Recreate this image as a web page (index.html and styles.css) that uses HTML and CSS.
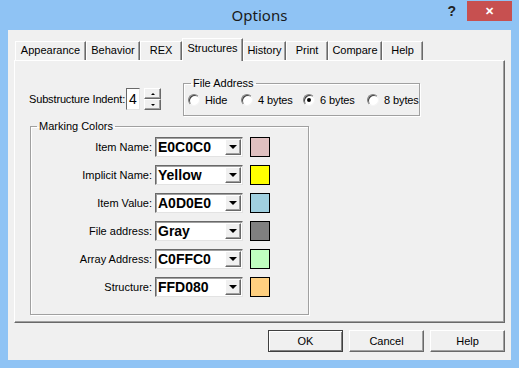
FILE: index.html
```
<!DOCTYPE html>
<html lang="en">
<head>
  <meta charset="UTF-8">
  <title>Options</title>
  <link rel="stylesheet" href="styles.css">
</head>
<body>
  <div class="window">
    <div class="titlebar">
      <div></div>
      <div class="title">Options</div>
      <div class="caption-btns">
        <span class="help-q">?</span>
        <span class="close-btn">&#x2715;</span>
      </div>
    </div>

    <div class="client">
      <div class="tabs">
        <div class="tab w-appearance">Appearance</div>
        <div class="tab w-behavior">Behavior</div>
        <div class="tab w-rex">REX</div>
        <div class="tab selected w-structures">Structures</div>
        <div class="tab w-history">History</div>
        <div class="tab w-print">Print</div>
        <div class="tab w-compare">Compare</div>
        <div class="tab w-help">Help</div>
      </div>

      <div class="panel">
        <div class="top-row">
          <div class="indent">
            <span class="indent-label">Substructure Indent:</span>
            <span class="edit">4</span>
            <span class="spinner">
              <span class="spin-btn"><span class="arrow-up"></span></span>
              <span class="spin-btn"><span class="arrow-down"></span></span>
            </span>
          </div>

          <fieldset class="group file-address">
            <legend>File Address</legend>
            <div class="radios">
              <label class="radio-item r1"><span class="radio"></span>Hide</label>
              <label class="radio-item r2"><span class="radio"></span>4 bytes</label>
              <label class="radio-item r3"><span class="radio"><span class="dot"></span></span>6 bytes</label>
              <label class="radio-item"><span class="radio"></span>8 bytes</label>
            </div>
          </fieldset>
        </div>

        <fieldset class="group marking">
          <legend>Marking Colors</legend>
          <div class="color-rows">
            <span class="row-label">Item Name:</span>
            <span class="combo"><span class="combo-text">E0C0C0</span><span class="drop"><span class="arrow-down big"></span></span></span>
            <span class="swatch c-item-name"></span>

            <span class="row-label">Implicit Name:</span>
            <span class="combo"><span class="combo-text">Yellow</span><span class="drop"><span class="arrow-down big"></span></span></span>
            <span class="swatch c-implicit"></span>

            <span class="row-label">Item Value:</span>
            <span class="combo"><span class="combo-text">A0D0E0</span><span class="drop"><span class="arrow-down big"></span></span></span>
            <span class="swatch c-item-value"></span>

            <span class="row-label">File address:</span>
            <span class="combo"><span class="combo-text">Gray</span><span class="drop"><span class="arrow-down big"></span></span></span>
            <span class="swatch c-file"></span>

            <span class="row-label">Array Address:</span>
            <span class="combo"><span class="combo-text">C0FFC0</span><span class="drop"><span class="arrow-down big"></span></span></span>
            <span class="swatch c-array"></span>

            <span class="row-label">Structure:</span>
            <span class="combo"><span class="combo-text">FFD080</span><span class="drop"><span class="arrow-down big"></span></span></span>
            <span class="swatch c-structure"></span>
          </div>
        </fieldset>
      </div>

      <div class="buttons">
        <button class="btn default">OK</button>
        <button class="btn">Cancel</button>
        <button class="btn">Help</button>
      </div>
    </div>
  </div>
</body>
</html>
```

FILE: styles.css
```
body {
  margin: 0;
  font-family: 'Liberation Sans', Arial, sans-serif;
  font-size: 11px;
  color: #000;
  background: #8fc3f4;
}

.window {
  width: 519px;
  height: 368px;
  overflow: hidden;
}

/* title bar */
.titlebar {
  height: 30px;
  display: grid;
  grid-template-columns: 1fr auto 1fr;
}

.title {
  font-family: 'Noto Sans', sans-serif;
  font-size: 15px;
  line-height: 30px;
  color: #1a1a1a;
}

.caption-btns {
  display: flex;
  justify-content: flex-end;
  align-items: flex-start;
  padding-right: 7px;
}

.help-q {
  font-family: 'Liberation Sans', sans-serif;
  font-weight: bold;
  font-size: 14px;
  margin: 3px 11px 0 0;
  color: #222;
}

.close-btn {
  width: 45px;
  height: 20px;
  margin-top: 1px;
  background: #c75050;
  color: #fff;
  font-size: 11px;
  font-weight: bold;
  line-height: 20px;
  text-align: center;
}

/* client area */
.client {
  margin: 0 8px;
  height: 330px;
  background: #f0f0f0;
}

.tabs {
  display: flex;
  align-items: flex-end;
  height: 22px;
  padding: 8px 0 0 7px;
}

.tab {
  box-sizing: border-box;
  height: 19px;
  line-height: 17px;
  text-align: center;
  border-top: 1px solid #fff;
  border-left: 1px solid #fff;
  border-right: 1px solid #696969;
  box-shadow: inset -1px 0 0 #a0a0a0;
  background: #f0f0f0;
}

.tab.selected {
  height: 23px;
  margin-bottom: -1px;
  line-height: 19px;
  position: relative;
  z-index: 1;
}

.w-appearance { width: 71px; }
.w-behavior { width: 54px; }
.w-rex { width: 42px; }
.w-structures { width: 61px; }
.w-history { width: 43px; }
.w-print { width: 42px; }
.w-compare { width: 54px; }
.w-help { width: 41px; }

.panel {
  box-sizing: border-box;
  width: 491px;
  height: 263px;
  margin-left: 6px;
  border: 1px solid;
  border-color: #fff #696969 #696969 #fff;
  box-shadow: inset -1px -1px 0 #a0a0a0;
}

.top-row {
  display: flex;
  align-items: flex-start;
  margin-top: 16px;
  padding-left: 14px;
}

.indent {
  display: flex;
  align-items: center;
  width: 132px;
  margin-top: 11px;
  white-space: nowrap;
}

.indent-label {
  letter-spacing: -0.15px;
}

.edit {
  box-sizing: border-box;
  width: 14px;
  height: 22px;
  margin-left: auto;
  padding-left: 2px;
  background: #fff;
  border: 1px solid;
  border-color: #696969 #e3e3e3 #e3e3e3 #696969;
  font-size: 14px;
  line-height: 20px;
}

.spinner {
  display: flex;
  flex-direction: column;
  margin-left: 4px;
}

.spin-btn {
  box-sizing: border-box;
  width: 17px;
  height: 11px;
  display: flex;
  align-items: center;
  justify-content: center;
  border: 1px solid;
  border-color: #fff #696969 #696969 #fff;
  box-shadow: inset -1px -1px 0 #a0a0a0;
}

.arrow-up {
  width: 0;
  height: 0;
  border-left: 2px solid transparent;
  border-right: 2px solid transparent;
  border-bottom: 2px solid #000;
}

.arrow-down {
  width: 0;
  height: 0;
  border-left: 2px solid transparent;
  border-right: 2px solid transparent;
  border-top: 2px solid #000;
}

.arrow-down.big {
  border-left-width: 4px;
  border-right-width: 4px;
  border-top-width: 4px;
}

/* group boxes */
.group {
  box-sizing: border-box;
  margin: 0;
  padding: 0;
  border: 1px solid #a0a0a0;
  box-shadow: 1px 1px 0 #fff, inset 1px 1px 0 #fff;
}

.group legend {
  margin-left: 7px;
  padding: 0 2px;
  line-height: 13px;
}

.file-address {
  width: 237px;
  height: 39px;
  margin-left: 22px;
}

.radios {
  display: flex;
  align-items: center;
  height: 14px;
  margin-top: 3px;
  padding-left: 4px;
  white-space: nowrap;
  letter-spacing: -0.1px;
}

.radio-item {
  display: flex;
  align-items: center;
  gap: 5px;
}

.r1 { width: 53px; }
.r2 { width: 62px; }
.r3 { width: 64px; }

.radio {
  box-sizing: border-box;
  width: 12px;
  height: 12px;
  border-radius: 50%;
  background: #fff;
  border: 1px solid;
  border-color: #808080 #f4f4f4 #f4f4f4 #808080;
  box-shadow: inset 1px 1px 0 #404040;
  display: flex;
  align-items: center;
  justify-content: center;
}

.dot {
  width: 4px;
  height: 4px;
  border-radius: 50%;
  background: #000;
}

.marking {
  width: 279px;
  height: 195px;
  margin: 4px 0 0 15px;
}

.marking legend {
  margin-left: 6px;
}

.color-rows {
  display: grid;
  grid-template-columns: 121px 88px 20px;
  grid-auto-rows: 20px;
  column-gap: 3px;
  row-gap: 8px;
  align-items: center;
  margin-top: 4px;
}

.row-label {
  text-align: right;
  white-space: nowrap;
}

.combo {
  box-sizing: border-box;
  height: 20px;
  display: flex;
  align-items: center;
  background: #fff;
  border: 1px solid;
  border-color: #696969 #e3e3e3 #e3e3e3 #696969;
  box-shadow: inset 1px 1px 0 #a0a0a0;
}

.combo-text {
  flex: 1;
  padding-left: 2px;
  font-weight: bold;
  font-size: 14px;
}

.drop {
  box-sizing: border-box;
  width: 16px;
  height: 16px;
  margin-right: 1px;
  display: flex;
  align-items: center;
  justify-content: center;
  background: #f0f0f0;
  border: 1px solid;
  border-color: #fff #696969 #696969 #fff;
  box-shadow: inset -1px -1px 0 #a0a0a0;
}

.swatch {
  box-sizing: border-box;
  width: 20px;
  height: 20px;
  margin-left: 4px;
  border: 1px solid #000;
}

.c-item-name { background: #e0c0c0; }
.c-implicit { background: #ffff00; }
.c-item-value { background: #a0d0e0; }
.c-file { background: #808080; }
.c-array { background: #c0ffc0; }
.c-structure { background: #ffd080; }

/* dialog buttons */
.buttons {
  display: flex;
  justify-content: flex-end;
  gap: 6px;
  margin-top: 7px;
  padding-right: 6px;
}

.btn {
  box-sizing: border-box;
  width: 75px;
  height: 22px;
  padding: 0;
  font-family: 'Liberation Sans', Arial, sans-serif;
  font-size: 11px;
  color: #000;
  background: #f0f0f0;
  border: 1px solid;
  border-color: #fff #696969 #696969 #fff;
  box-shadow: inset -1px -1px 0 #a0a0a0;
}

.btn.default {
  border-color: #404040;
  box-shadow: inset 1px 1px 0 #fff, inset -1px -1px 0 #808080;
}
```
